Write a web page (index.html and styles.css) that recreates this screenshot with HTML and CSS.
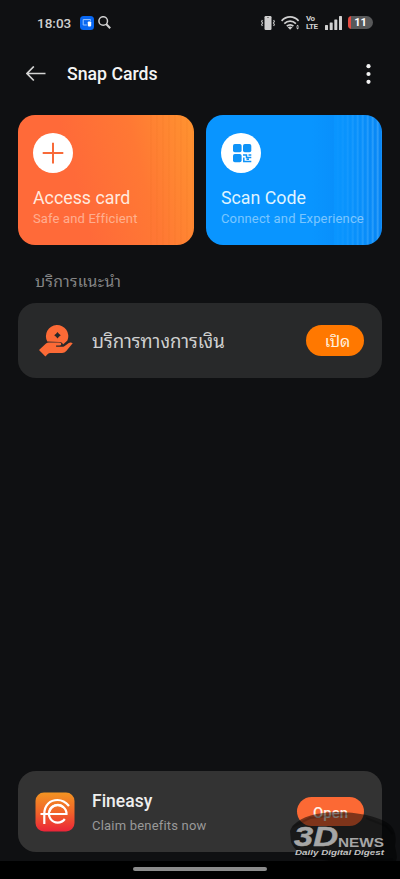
FILE: index.html
```html
<!DOCTYPE html>
<html lang="th">
<head>
<meta charset="utf-8">
<meta name="viewport" content="width=device-width, initial-scale=1">
<title>Snap Cards</title>
<link rel="stylesheet" href="styles.css">
</head>
<body>
<div class="screen">
  <div class="status">
    <span class="time">18:03</span>
    <svg class="cast" width="14" height="14" viewBox="0 0 14 14"><rect width="14" height="14" rx="3.5" fill="#0867f2"/><path d="M6.8 9H3.2V3.6h7.3v1.2" fill="none" stroke="#9cc5ff"/><rect x="7.8" y="5.4" width="3.4" height="5" rx=".8" fill="#fff"/></svg>
    <svg class="search" width="13" height="13" viewBox="0 0 13 13" fill="none" stroke="#cfcfcf"><circle cx="5.2" cy="5" r="4.3" stroke-width="1.5"/><path d="M8.200 8l4 4.300" stroke-width="2"/></svg>
    <svg class="vibrate" width="14" height="14" viewBox="0 0 14 14"><rect x="3.5" width="7" height="14" rx="1.2" fill="#d0d0d0"/><path d="M6.2 1.5h1.6" stroke="#555" stroke-width=".8"/><path d="M1.4 4L.6 5.5l1 1.500-1 1.500.8 1.600M12.600 4l.8 1.500-1 1.500 1 1.500-.8 1.600" fill="none" stroke="#c8c8c8" stroke-width="1.100"/></svg>
    <svg class="wifi" width="19" height="14" viewBox="0 0 19 14" fill="none" stroke="#d0d0d0" stroke-width="1.700"><path d="M.6 4.800C5.500-.4 12.700-.4 17.600 4.800M3.300 7.600c3.400-3.400 8.200-3.400 11.600 0M5.800 10.200c1.900-1.900 4.700-1.900 6.600 0"/><path d="M6.700 11.200l2.400 2.600 2.400-2.600q-2.400-1.600-4.800 0z" fill="#d0d0d0" stroke="none"/><path d="M15 10.600l1.600-1.900 1.600 1.900zM15 11.500l1.600 1.900 1.600-1.900z" fill="#d0d0d0" stroke="none"/></svg>
    <span class="volte"><span>Vo</span><span>LTE</span></span>
    <svg class="signal" width="17" height="14" viewBox="0 0 17 14" fill="#d0d0d0"><rect y="9" width="3" height="5" rx=".6"/><rect x="4.700" y="6.500" width="3" height="7.500" rx=".6"/><rect x="9.300" y="3.500" width="3" height="10.500" rx=".6"/><rect x="14" width="3" height="14" rx=".6"/></svg>
    <span class="battery">11</span>
  </div>

  <header class="bar">
    <svg class="back" width="20" height="16" viewBox="0 0 20 16" fill="none" stroke="#d4d4d4" stroke-width="1.700"><path d="M19.500 7.500H1M7.800.5L1 7.500l6.800 7"/></svg>
    <h1>Snap Cards</h1>
    <svg class="more" width="5" height="20" viewBox="0 0 5 20" fill="#f2f2f2"><circle cx="2.500" cy="2.200" r="2.100"/><circle cx="2.500" cy="10" r="2.100"/><circle cx="2.500" cy="17.800" r="2.100"/></svg>
  </header>

  <div class="cards">
    <section class="card access">
      <svg class="badge" width="40" height="40" viewBox="0 0 40 40"><circle cx="20" cy="20" r="20" fill="#fff"/><path d="M20 9.800v20.600M9.700 20h20.600" stroke="#f86a39" stroke-width="2"/></svg>
      <h2>Access card</h2>
      <p>Safe and Efficient</p>
    </section>
    <section class="card scan">
      <svg class="badge" width="40" height="40" viewBox="0 0 40 40"><circle cx="20" cy="20" r="20" fill="#fff"/><g fill="#0e93f8"><rect x="12" y="11" width="8.600" height="8.300" rx="1.800"/><rect x="22" y="11" width="8.300" height="8.300" rx="1.800"/><rect x="12" y="21" width="8.600" height="8.300" rx="1.800"/></g><path d="M22 21.900h3.500v2.600h4.800M27.500 21.900h2.800M22.800 24.500v4h7.500M25.500 26.300h2.500" fill="none" stroke="#0e93f8" stroke-width="1.500"/></svg>
      <h2>Scan Code</h2>
      <p>Connect and Experience</p>
    </section>
  </div>

  <h3 class="label">บริการแนะนำ</h3>

  <section class="service">
    <svg class="hand" width="34" height="33" viewBox="0 0 34 33"><path fill="#fc6a36" fill-rule="evenodd" d="M8.300 17.600A11.200 11.200 0 1 1 28.400 16.600L24 20.500Q23.500 18 20.500 18zM18.500 7.900q-1.200 2-3.300 3.300 2.100 1.300 3.300 3.300 1.200-2 3.300-3.300-2.100-1.300-3.300-3.300z"/><path fill="#fc6a36" d="M0 25.900l7-6.400q1.200-1 3-1h10.300q2.300 0 2 1.800-.2 1.300-2 1.300h-3.200v1.200h5.800q1.600 0 2.800-.9l4.100-2.800q1.800-1 3.900.1l-6.400 7.800q-1.700 2.100-4.200 2.100H11.300q-1.500 0-2.500 1l-2.400 2.400z"/></svg>
    <span class="service-name">บริการทางการเงิน</span>
    <button class="enable">เปิด</button>
  </section>

  <section class="promo">
    <svg class="logo" width="40" height="40" viewBox="0 0 40 40"><defs><linearGradient id="lg" x1="0" y1="0" x2="0" y2="1"><stop offset="0" stop-color="#f39422"/><stop offset=".5" stop-color="#f16529"/><stop offset="1" stop-color="#eb2438"/></linearGradient></defs><rect x=".5" y=".5" width="39" height="39" rx="8.500" fill="url(#lg)"/><g fill="none" stroke="#fff" stroke-width="2.200"><path d="M9.300 32V22C9.300 12.500 15.500 8 22.500 8q6.500 0 11.500 6"/><path d="M5.500 22H31.500A8.800 8.800 0 1 0 29.800 27"/><path d="M14.500 19.500q2-6.300 8.300-6.300 3.500 0 5.700 2"/></g></svg>
    <div class="promo-text"><h2>Fineasy</h2><p>Claim benefits now</p></div>
    <button class="open">Open</button>
  </section>

  <footer class="nav"><span class="home"></span></footer>

  <svg class="watermark" width="116" height="56" viewBox="0 0 116 56"><path d="M5 20C8 11 20 4 38 2 62-1 88 4 101 11 110 16 112 25 110 35 111 41 113 46 111 50L78 52 44 50 20 46C13 42 8 36 6 31z" fill="#000" fill-opacity=".5"/><path d="M7 16L25 7 63 3M81 7l20 8 7 8M9 34l10 10 37 6M83 50l25-2" fill="none" stroke="#000" stroke-opacity=".18" stroke-width="2"/><g fill="#a6a6a6" font-family="'Liberation Sans', sans-serif" font-weight="700" font-style="italic"><text x="9" y="34.500" font-size="28" textLength="44" lengthAdjust="spacingAndGlyphs" stroke="#a6a6a6" stroke-width=".5">3D</text><text x="53" y="35.500" font-size="12.500" font-style="normal" textLength="46" lengthAdjust="spacingAndGlyphs">NEWS</text><text x="10" y="43.500" font-size="7.500" textLength="89" lengthAdjust="spacingAndGlyphs" fill="#c2c2c2">Daily Digital Digest</text></g></svg>
</div>
</body>
</html>
```
FILE: styles.css
```css
* { box-sizing: border-box; }
body { margin: 0; background: #0f1012; font-family: Roboto, "Noto Sans Thai Looped", "Noto Looped Thai", Loma, Waree, Garuda, "Noto Sans Thai", "Noto Sans", sans-serif; }
h1, h2, h3, p { margin: 0; font-weight: 400; white-space: nowrap; }
svg { display: block; flex: none; }
button { border: 0; padding: 0; font-family: inherit; }
.screen { position: relative; width: 400px; height: 879px; display: flex; flex-direction: column; background: #0f1012; overflow: hidden; }
.status { height: 45px; padding: 0 27px 0 37px; display: flex; align-items: center; color: #cfcfcf; }
.time { width: 43px; font-size: 13.5px; font-weight: 500; }
.search { margin-left: 4px; }
.vibrate { margin-left: auto; }
.wifi { margin-left: 6px; }
.volte { margin-left: 6px; width: 13px; display: flex; flex-direction: column; font-size: 8px; line-height: 8px; font-weight: 700; letter-spacing: -.5px; }
.signal { margin-left: 6px; }
.battery { margin-left: 6px; width: 25px; height: 13px; border-radius: 4px 7px 7px 4px; background: linear-gradient(90deg, #e34b42 3px, #58595a 3px); color: #fff; font-size: 11px; line-height: 14px; font-weight: 700; text-align: center; }
.bar { height: 57px; padding: 0 29px 0 26px; display: flex; align-items: center; }
.bar h1 { margin-left: 21px; font-size: 17.7px; font-weight: 500; color: #f4f4f4; }
.more { margin-left: auto; }
.cards { margin-top: 13px; padding: 0 18px; display: grid; grid-template-columns: 1fr 1fr; gap: 12px; }
.card { height: 130px; border-radius: 17px; padding: 18px 15px; }
.access { background: repeating-linear-gradient(90deg, transparent 0 4px, rgba(220,100,20,.16) 5px, transparent 6px) right / 48px 100% no-repeat, linear-gradient(75deg, #ff6a39 0 35%, #ff7834 68%, #ff9230 98%); color: #ffe9df; }
.scan { background: linear-gradient(90deg, #0995ff, transparent) right / 48px 100% no-repeat, repeating-linear-gradient(90deg, transparent 0 2px, rgba(125,200,255,.45) 4px, transparent 5px) right / 48px 100% no-repeat, linear-gradient(90deg, #0995ff 60%, #0885f4); color: #dff3ff; }
.card h2 { margin-top: 15px; font-size: 17.8px; line-height: 20px; }
.card p { margin-top: 2px; font-size: 13px; line-height: 17px; opacity: .52; letter-spacing: .15px; }
.label { margin: 26px 0 0 35px; height: 22px; font-size: 15.8px; line-height: 22px; letter-spacing: .3px; color: #858585; }
.service { margin: 10px 18px 0; height: 75px; border-radius: 18px; background: #28292a; padding: 0 18px 0 21px; display: flex; align-items: center; }
.service-name { margin-left: 19px; padding-bottom: 2px; font-size: 18.6px; color: #d0d0d0; white-space: nowrap; }
.enable { margin-left: auto; width: 58px; height: 31px; border-radius: 16px; background: #ff7800; color: #fff0df; font-size: 16px; padding: 0 0 2px 5px; }
.promo { margin: auto 18px 0; height: 81px; border-radius: 18px; background: #333; padding: 0 18px 0 17px; display: flex; align-items: center; }
.promo-text { margin-left: 17px; padding-top: 2px; }
.promo h2 { font-size: 17.5px; line-height: 22px; font-weight: 500; color: #eee; }
.promo p { margin-top: 5px; font-size: 13px; line-height: 18px; color: #999; letter-spacing: .2px; }
.open { margin-left: auto; width: 67px; height: 29px; border-radius: 15px; background: #fc6934; color: #fff1e9; font-size: 15px; font-weight: 500; padding-top: 2px; }
.nav { height: 18px; margin-top: 9px; background: #000; display: flex; justify-content: center; padding-top: 6px; flex: none; }
.home { width: 134px; height: 4px; border-radius: 2px; background: #8b8b8b; }
.watermark { position: absolute; left: 285px; top: 811px; }
```
